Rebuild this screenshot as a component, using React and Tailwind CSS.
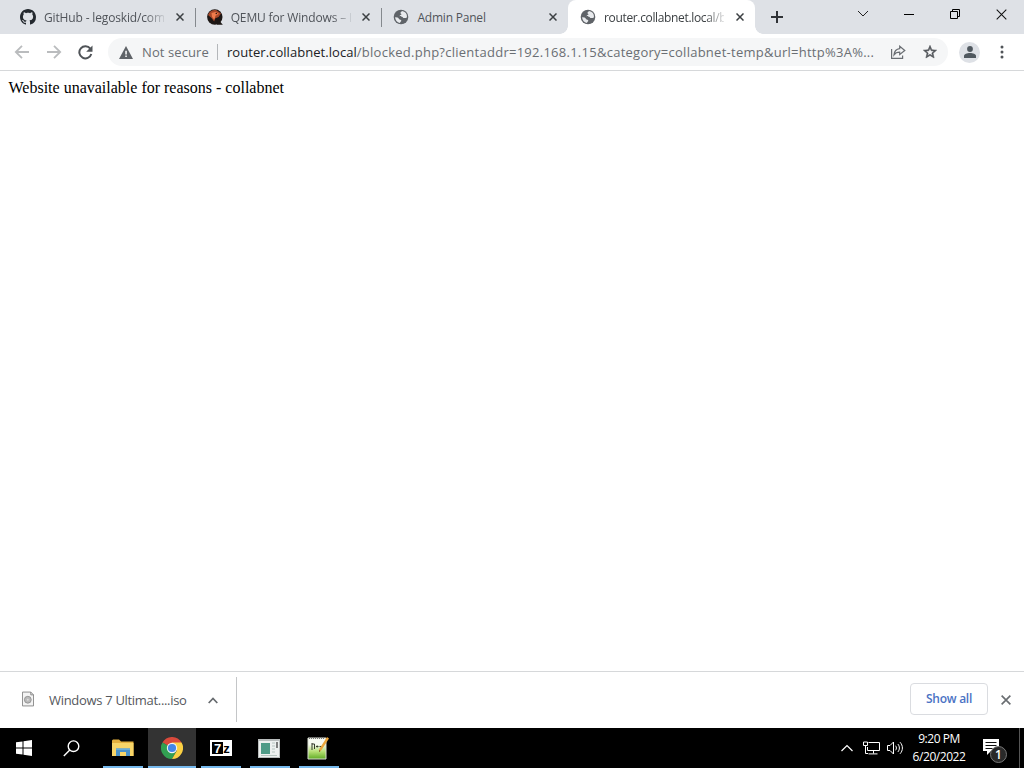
import React from "react";

const GithubIcon = () => (
  <svg className="shrink-0" width="16" height="16" viewBox="0 0 16 16" fill="#24292f">
    <path d="M8 0C3.58 0 0 3.58 0 8c0 3.54 2.29 6.53 5.47 7.59.4.07.55-.17.55-.38 0-.19-.01-.82-.01-1.49-2.01.37-2.53-.49-2.69-.94-.09-.23-.48-.94-.82-1.13-.28-.15-.68-.52-.01-.53.63-.01 1.08.58 1.23.82.72 1.21 1.87.87 2.33.66.07-.52.28-.87.51-1.07-1.78-.2-3.64-.89-3.64-3.95 0-.87.31-1.59.82-2.15-.08-.2-.36-1.02.08-2.12 0 0 .67-.21 2.2.82.64-.18 1.32-.27 2-.27s1.36.09 2 .27c1.53-1.04 2.2-.82 2.2-.82.44 1.1.16 1.92.08 2.12.51.56.82 1.27.82 2.15 0 3.07-1.87 3.75-3.65 3.95.29.25.54.73.54 1.48 0 1.07-.01 1.93-.01 2.2 0 .21.15.46.55.38A8.01 8.01 0 0 0 16 8c0-4.42-3.58-8-8-8z" />
  </svg>
);

const QemuIcon = () => (
  <svg className="shrink-0" width="16" height="16" viewBox="0 0 16 16">
    <circle cx="7.8" cy="8" r="7.7" fill="#1d1715" />
    <path d="M11 10l4.800 5.800H10z" fill="#1d1715" />
    <path d="M1 6C2.500 2 6 .4 9.500 1.200l4.500 3.300-2.500 3.500-3.500 1.500-.8 3L4.500 9z" fill="#a8482a" />
    <path d="M4.500 4L8.500 3l3.500 1.800-3.500 2-1.200 4-2.300-3z" fill="#f07c4c" />
    <circle cx="9.300" cy="4.500" r=".8" fill="#2b1710" />
  </svg>
);

const GlobeIcon = () => (
  <svg className="shrink-0" width="16" height="16" viewBox="0 0 16 16">
    <circle cx="8" cy="8" r="7.300" fill="#5f6368" />
    <path
      d="M9 2.100c-.5 1-1.500.8-1.500 1.800 0 .9 1 .6 1 1.400 0 .9-1.900.7-1.900 1.800 0 .9 2.700.2 3.200 1.100.4.800 1.100 1 2.300.9 1-.1 1.600-.6 1.900-.9A6 6 0 0 0 9 2.100zM2.100 8.300A6 6 0 0 0 7 13.900c.1-1.100 1.300-1.200 1.300-2.200 0-1.200-1.700-.9-2.300-1.700-.5-.8-.8-1.700-3.900-1.700z"
      fill="#e8eaed"
    />
  </svg>
);

const CloseIcon = ({ size = 8, color = "#3c4043", width = 1.5 }) => (
  <svg width={size} height={size} viewBox="0 0 8 8" stroke={color} strokeWidth={width}>
    <path d="M.5.5l7 7M7.5.5l-7 7" />
  </svg>
);

const tabs = [
  { title: "GitHub - legoskid/com", icon: <GithubIcon />, fade: true, tracking: "tracking-[-0.15px]" },
  { title: "QEMU for Windows – I", icon: <QemuIcon />, fade: true, tracking: "tracking-[-0.15px]" },
  { title: "Admin Panel", icon: <GlobeIcon />, tracking: "tracking-[-0.2px]" },
  { title: "router.collabnet.local/b", icon: <GlobeIcon />, fade: true, active: true, tracking: "tracking-[-0.350px]" },
];

function Tab({ tab, divider }) {
  return (
    <div
      className={
        "relative flex h-[34px] w-[186.700px] shrink-0 items-center pl-3 " +
        (tab.active ? "rounded-t-lg bg-white text-[#3c4043]" : "text-[#50545a]")
      }
    >
      {tab.icon}
      <div
        className={
          "ml-2 w-[120px] whitespace-nowrap pt-px text-[12px] leading-4 " +
          tab.tracking +
          (tab.fade ? " [mask-image:linear-gradient(to_right,black_84%,rgba(0,0,0,0.150)_100%)]" : "")
        }
      >
        {tab.title}
      </div>
      <div className="ml-[11.500px]">
        <CloseIcon />
      </div>
      {divider && <div className="absolute right-[-1px] top-2 h-[19px] w-px bg-[#85898e]" />}
      {tab.active && (
        <>
          <div className="absolute bottom-0 -left-2 h-2 w-2 bg-[radial-gradient(circle_at_0_0,transparent_7.500px,white_8px)]" />
          <div className="absolute bottom-0 -right-2 h-2 w-2 bg-[radial-gradient(circle_at_100%_0,transparent_7.500px,white_8px)]" />
        </>
      )}
    </div>
  );
}

function TabStrip() {
  return (
    <div className="flex h-[34px] shrink-0 bg-[#dee1e6] pl-2">
      {tabs.map((tab, i) => (
        <Tab key={i} tab={tab} divider={i < 2} />
      ))}
      <div className="flex flex-1 items-center pl-4">
        <svg width="12" height="12" viewBox="0 0 12 12" stroke="#303337" strokeWidth="2">
          <path d="M6 0v12M0 6h12" />
        </svg>
      </div>
      <div className="flex h-[28px] items-center">
        <div className="flex w-[46px] justify-center">
          <svg width="12" height="8" viewBox="0 0 12 8" fill="none" stroke="#222">
            <path d="M1 1l5 5 5-5" />
          </svg>
        </div>
        <div className="flex w-[46px] justify-center">
          <div className="h-px w-[10px] bg-black" />
        </div>
        <div className="flex w-[46px] justify-center">
          <svg width="10" height="10" viewBox="0 0 10 10" fill="none" stroke="#000">
            <path d="M.5 2.500h7v7h-7zM2.500 2.500v-2h7v7h-2" />
          </svg>
        </div>
        <div className="flex w-[46px] justify-center">
          <CloseIcon size={11} color="#111" width={0.75} />
        </div>
      </div>
    </div>
  );
}

function Toolbar() {
  return (
    <div className="flex h-[37px] shrink-0 items-center border-b border-[#d6d8da] bg-white">
      <div className="flex w-[108px] items-center gap-4 pl-[14px]">
        <svg className="shrink-0" width="16" height="14" viewBox="0 0 16 14" fill="none" stroke="#babcbe" strokeWidth="1.800">
          <path d="M15 7H2M8 .8L1.800 7 8 13.200" />
        </svg>
        <svg className="shrink-0" width="16" height="14" viewBox="0 0 16 14" fill="none" stroke="#babcbe" strokeWidth="1.800">
          <path d="M1 7h13M8 .8L14.200 7 8 13.200" />
        </svg>
        <svg className="shrink-0" width="15" height="15" viewBox="0 0 15 15">
          <path d="M12.300 3.600A6.100 6.100 0 1 0 13.300 9" fill="none" stroke="#505458" strokeWidth="2" />
          <path d="M14.500.5v6.300H8.200z" fill="#505458" />
        </svg>
      </div>
      <div className="flex h-7 w-[840px] items-center rounded-full bg-[#f5f6f7] pl-[11px] text-[13px] text-[#6a6e73]">
        <svg width="14" height="13" viewBox="0 0 14 13">
          <path d="M7 0l7 13H0z" fill="#5f6368" />
          <path d="M6.300 4.700h1.500v3.700H6.300zM6.300 9.600h1.500v1.500H6.300z" fill="#fff" />
        </svg>
        <div className="ml-[9px] w-[75px] whitespace-nowrap pt-px tracking-[0.1px]">Not secure</div>
        <div className="h-4 w-px bg-[#b4b7ba]" />
        <div className="ml-[9px] w-[663px] whitespace-nowrap pt-px">
          <span className="tracking-[0.050px] text-[#202124]">router.collabnet.local</span>
          <span className="tracking-[0.260px]">
            /blocked.php?clientaddr=192.168.1.15&amp;category=collabnet-temp&amp;url=http%3A%...
          </span>
        </div>
        <svg className="shrink-0" width="16" height="14" viewBox="0 0 16 14" fill="none" stroke="#6a6e73" strokeWidth="1.200">
          <path d="M1.600 4v9.300h11V10.500" />
          <path d="M9.700 1.200L14.800 5.500 9.700 9.500V7.200C7 7.200 5.300 8 4 9.800 4.300 6.300 6.300 4 9.700 3.600z" />
        </svg>
        <svg className="ml-[16px] shrink-0" width="16" height="16" viewBox="0 0 24 24">
          <path
            d="M22 9.240l-7.190-.62L12 2 9.190 8.630 2 9.240l5.460 4.730L5.820 21 12 17.270 18.180 21l-1.630-7.030L22 9.240zM12 15.400l-3.760 2.270 1-4.280-3.320-2.880 4.380-.38L12 6.100l1.710 4.040 4.380.38-3.320 2.880 1 4.280L12 15.400z"
            fill="#505458"
            stroke="#505458"
            strokeWidth=".8"
          />
        </svg>
      </div>
      <div className="ml-[11px] flex h-[21px] w-[21px] items-center justify-center rounded-full bg-[#dee1e6]">
        <svg width="12" height="12" viewBox="0 0 12 12" fill="#50585f">
          <circle cx="6" cy="3" r="2.900" />
          <path d="M0 12V10c0-2 3-3 6-3s6 1 6 3v2z" />
        </svg>
      </div>
      <svg className="ml-[20px]" width="4" height="14" viewBox="0 0 4 14" fill="#505458">
        <circle cx="2" cy="2" r="1.500" />
        <circle cx="2" cy="7" r="1.500" />
        <circle cx="2" cy="12" r="1.500" />
      </svg>
    </div>
  );
}

function DownloadBar() {
  return (
    <div className="flex h-[57px] shrink-0 items-center border-t border-[#d6d8da] bg-white pb-px">
      <div className="flex h-[45px] w-[237px] items-center border-r border-[#c4c6c8] pl-[22px]">
        <svg className="mb-px" width="12" height="16" viewBox="0 0 13 16">
          <path d="M.5.500h9l3 3v12H.5z" fill="#f4f4f4" stroke="#858585" />
          <path d="M9.500.500v3h3" fill="none" stroke="#858585" />
          <circle cx="6.300" cy="8.800" r="3.700" fill="#bbb" stroke="#929292" />
          <circle cx="6.300" cy="8.800" r="1" fill="#ddd" />
        </svg>
        <div className="ml-[15px] w-[159px] whitespace-nowrap pt-[3px] text-[13px] tracking-[-0.310px] text-[#55585c]">
          Windows 7 Ultimat....iso
        </div>
        <svg className="mt-px" width="10" height="7" viewBox="0 0 10 7" fill="none" stroke="#666a6e" strokeWidth="1.700">
          <path d="M.7 6L5 1.500 9.300 6" />
        </svg>
      </div>
      <div className="mb-px ml-auto mr-[13px] flex h-8 w-[78px] items-center justify-center whitespace-nowrap rounded border border-[#dadce0] text-[12px] font-semibold tracking-[-0.250px] text-[#4a72c4]">
        Show all
      </div>
      <div className="mr-[13px]">
        <CloseIcon size={10} color="#696d71" width={1.3} />
      </div>
    </div>
  );
}

const ExplorerIcon = () => (
  <svg width="22" height="18" viewBox="0 0 22 18">
    <path d="M0 1.500L1 .500h6l2 2h12.500V17H0z" fill="#e5b13f" />
    <path d="M0 4h21.500v13H0z" fill="#f8d568" />
    <path d="M4 17V9.500h14V17h-4v-4H8v4z" fill="#4a92c9" />
    <path d="M4 9.500h14v1.500H4z" fill="#6bafda" />
  </svg>
);

const ChromeIcon = () => (
  <svg width="22" height="22" viewBox="0 0 22 22">
    <path d="M11 11L1.470 5.500A11 11 0 0 1 20.530 5.500z" fill="#da4a3c" />
    <path d="M11 11L1.470 5.500A11 11 0 0 0 11 22l4.500-8z" fill="#32a052" />
    <path d="M11 5.500h9.530A11 11 0 0 1 11 22l4.760-8.250z" fill="#fbd043" />
    <circle cx="11" cy="11" r="5.200" fill="#f4f4f4" />
    <circle cx="11" cy="11" r="4.100" fill="#4486e8" />
  </svg>
);

const SevenZipIcon = () => (
  <div className="flex h-4 w-[22px] items-center bg-white p-[2px] font-['Liberation_Sans'] font-bold leading-none">
    <div className="flex h-3 w-[11px] items-center justify-center bg-black text-[13px] text-white">7</div>
    <div className="flex w-[7px] justify-center pt-px text-[13px] text-black">z</div>
  </div>
);

const WindowAppIcon = () => (
  <svg width="22" height="19" viewBox="0 0 22 19">
    <path d="M0 0h22v19H0z" fill="#b9bdbd" />
    <path d="M1 2h20v16H1z" fill="#edf0ef" />
    <path d="M3 4h9v11H3z" fill="#4f9b87" />
    <path d="M14 4h3M14 7h3M14 10h3M14 13h3M3 16.500h16" stroke="#b7c4c0" />
    <path d="M19 3v6" stroke="#444" strokeWidth="1.300" />
  </svg>
);

const NotepadIcon = () => (
  <svg width="22" height="24" viewBox="0 0 22 24">
    <defs>
      <linearGradient id="note" x1="0" y1="0" x2="0" y2="1">
        <stop offset=".3" stopColor="#f7faf2" />
        <stop offset=".65" stopColor="#b5df73" />
        <stop offset="1" stopColor="#5fac25" />
      </linearGradient>
    </defs>
    <path d="M1 2h18v21H1z" fill="url(#note)" stroke="#d8ddd0" />
    <path d="M2 2h16" stroke="#777" strokeWidth="2" strokeDasharray="1 1" />
    <path d="M5 7v7M5 8h2.500v5M9 10.500h2.500M10.200 9.500v2M12.500 10.500H15" stroke="#343b2b" fill="none" />
    <path d="M20 1l2 1.500L14.500 14l-2.500 2 .3-3z" fill="#eca53a" />
    <path d="M12 16l.3-2 1.200 1z" fill="#5d4021" />
  </svg>
);

const apps = [
  { icon: <ExplorerIcon />, cell: "w-[46px]", line: "w-10" },
  { icon: <ChromeIcon />, cell: "ml-[2px] w-12 bg-[#333]", line: "w-12" },
  { icon: <SevenZipIcon />, cell: "ml-px w-12", line: "w-10" },
  { icon: <WindowAppIcon />, cell: "ml-px w-12", line: "w-10" },
  { icon: <NotepadIcon />, cell: "ml-px w-12", line: "w-10" },
];

function Taskbar() {
  return (
    <div className="flex h-10 shrink-0 items-center bg-black text-white">
      <div className="flex w-12 justify-center">
        <svg width="16" height="16" viewBox="0 0 16 16" fill="#fff">
          <path d="M0 2.300L6.500 1.400v6.100H0zM7.500 1.200L16 0v7.500H7.500zM0 8.500h6.500v6.100L0 13.700zM7.500 8.500H16V16l-8.500-1.200z" />
        </svg>
      </div>
      <div className="flex w-[52px] justify-center pr-[5px]">
        <svg width="17" height="17" viewBox="0 0 17 17" fill="none" stroke="#fff" strokeWidth="1.400">
          <circle cx="10.500" cy="6.200" r="5.300" />
          <path d="M6.800 10L.8 16" />
        </svg>
      </div>
      {apps.map((app, i) => (
        <div key={i} className={"flex h-10 shrink-0 flex-col items-center " + app.cell}>
          <div className={"flex h-[38px] items-center pt-[2px]" + (i > 2 ? " pr-[2px]" : "")}>{app.icon}</div>
          <div className={"h-[2px] bg-[#76b9ed] " + app.line} />
        </div>
      ))}
      <div className="ml-auto flex h-10 items-center">
        <svg width="12" height="8" viewBox="0 0 12 8" fill="none" stroke="#fff" strokeWidth="1.200">
          <path d="M.5 7L6 1.500 11.500 7" />
        </svg>
        <svg className="ml-[10px]" width="17" height="14" viewBox="0 0 17 14" fill="none" stroke="#fff">
          <path d="M5.500 1.500h11v8H4.500V6M10.500 9.500v3M5.500 12.900h9M.5 1h4v3.500h-4zM2.500 4.500v8H5" />
        </svg>
        <svg className="ml-[7px]" width="17" height="14" viewBox="0 0 17 14" fill="none" stroke="#fff">
          <path d="M.5 4.500H3L6.500 1v12L3 9.500H.500zM8.500 4.700c1.200 1.300 1.200 3.300 0 4.600" />
          <path d="M10.800 3c2.100 2.200 2.100 5.800 0 8M13 1.200c3.200 3.300 3.200 8.300 0 11.600" />
        </svg>
        <div className="ml-[7px] w-[56px] whitespace-nowrap text-center text-[12px] leading-[18px] tracking-[-0.45px]">
          <div>9:20 PM</div>
          <div>6/20/2022</div>
        </div>
        <div className="relative ml-4 h-[18px] w-4">
          <svg width="16" height="16" viewBox="0 0 16 16">
            <path d="M0 0h16v12H8l-4 4v-4H0z" fill="#fff" />
            <path d="M2.500 3.500h11M2.500 6.500h11M2.500 9.500h7" stroke="#111" />
          </svg>
          <div className="absolute left-[7px] top-[7px] flex h-[17px] w-[17px] items-center justify-center rounded-full border border-[#777] bg-[#292929] text-[12px] font-semibold leading-none">
            1
          </div>
        </div>
        <div className="ml-5 mr-1 h-10 w-px bg-[#555]" />
      </div>
    </div>
  );
}

function App() {
  return (
    <div className="flex h-screen w-[1024px] flex-col overflow-hidden bg-white font-['Open_Sans','Noto_Sans',sans-serif]">
      <TabStrip />
      <Toolbar />
      <div className="flex-1 py-2 pl-[8.500px] font-['Liberation_Serif',serif] text-[16px] leading-[18px] text-black">
        Website unavailable for reasons - collabnet
      </div>
      <DownloadBar />
      <Taskbar />
    </div>
  );
}

export default App;
